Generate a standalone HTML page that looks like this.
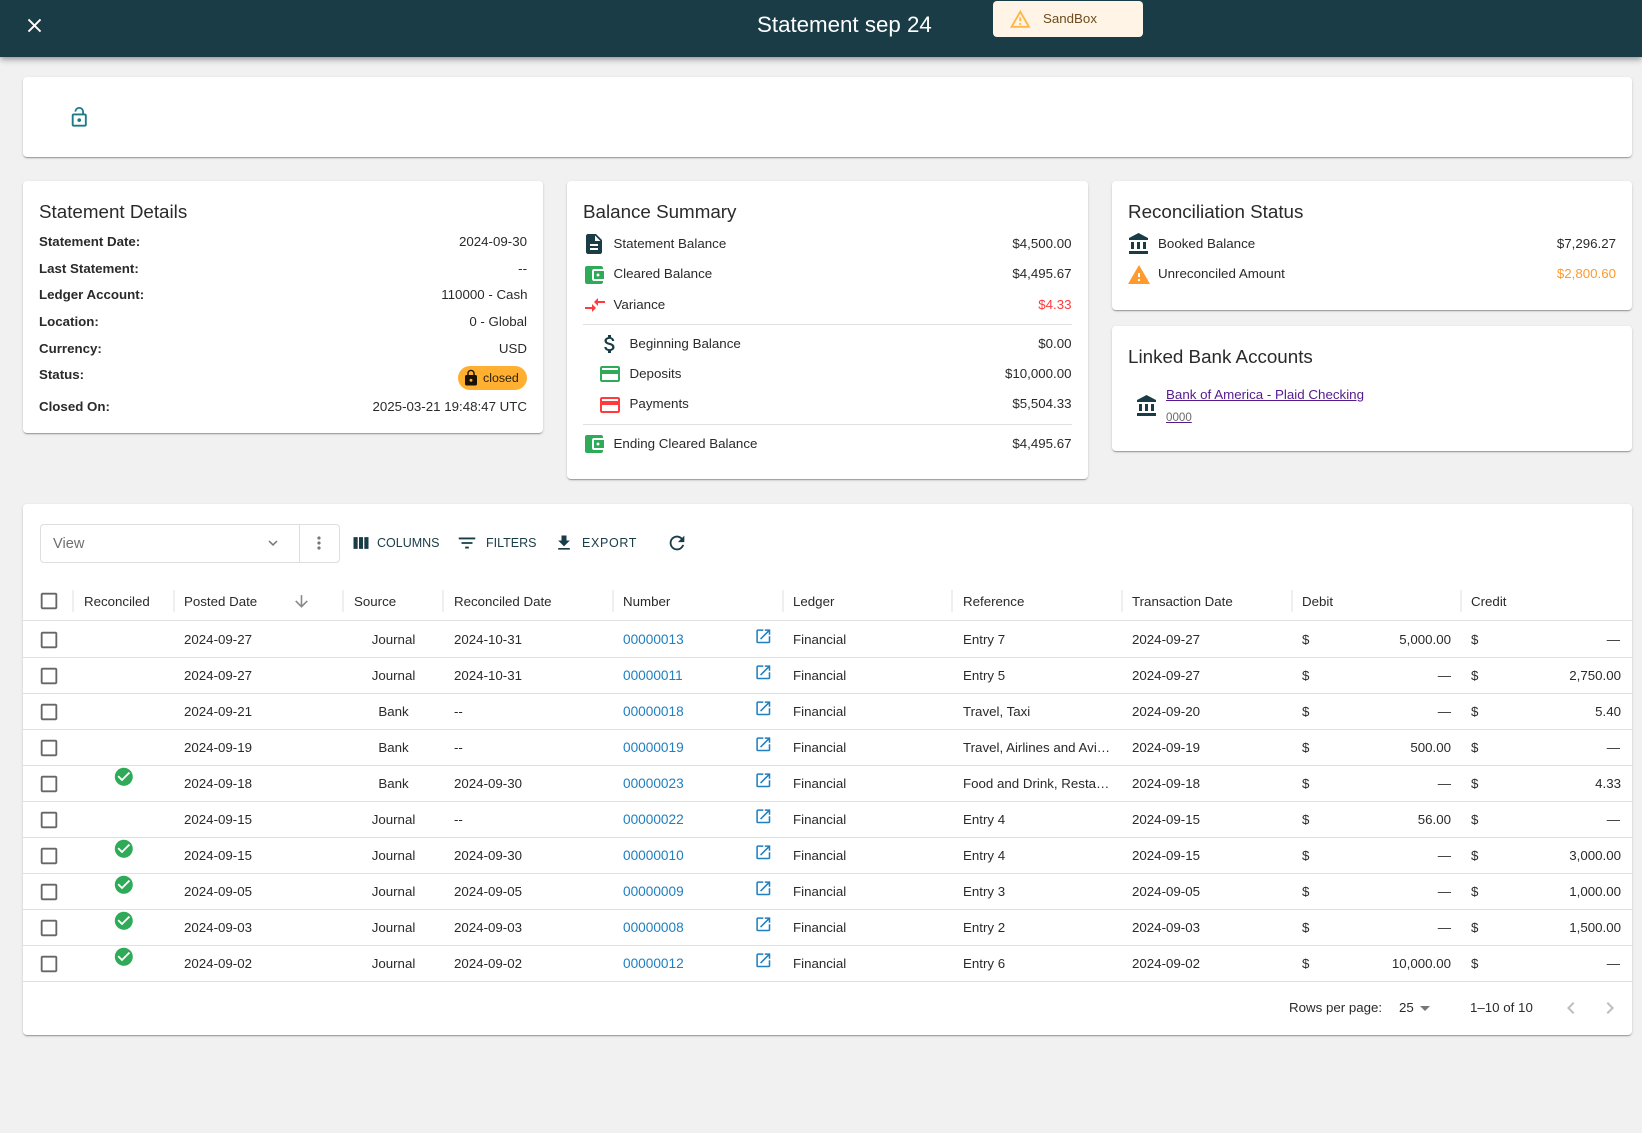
<!DOCTYPE html>
<html lang="en"><head><meta charset="utf-8"><title>Statement sep 24</title>
<style>
*{box-sizing:border-box}
html,body{margin:0;padding:0;width:1642px;height:1133px;overflow:hidden;background:#f1f1f1;font-family:"Liberation Sans",Arial,sans-serif;color:#2a2a2a}
.a{position:absolute}
.card{position:absolute;background:#fff;border-radius:4px;box-shadow:0 2px 1px -1px rgba(0,0,0,.2),0 1px 1px rgba(0,0,0,.14),0 1px 3px rgba(0,0,0,.12)}
.t{position:absolute;white-space:nowrap;line-height:20px;height:20px;font-size:13.3px}
.h{font-size:18.8px;line-height:24px;height:24px}
.b{font-weight:bold}
.l{font-size:13.35px}
.rr{text-align:right;width:300px}
svg.i{position:absolute;width:24px;height:24px;fill:currentColor}
.d{position:absolute;height:1px;background:#e0e0e0}
.sep{position:absolute;top:590px;width:2px;height:22px;background:#efefef}
.r{position:absolute;left:23px;width:1609px;height:35px}
.r i{position:absolute;font-style:normal;line-height:36px;height:36px;font-size:13.3px;white-space:nowrap;top:0}
.r i.lk{color:#1f7fc0;left:600px;font-size:13.65px}
.r i.dt{left:161px}
.r i.src{left:320.5px;width:100px;text-align:center}
.r i.rd{left:431px}
.r i.lg{left:770px}
.r i.rf{left:940px}
.r i.td{left:1109px}
.r i.d1{left:1279px}
.r i.am1{left:1279px;width:149px;text-align:right}
.r i.d2{left:1448px}
.r i.am2{left:1448px;width:150px;text-align:right}
.r i.dash{padding-right:1px}
.r svg.bx{left:15px;top:7px;width:22px;height:22px;color:#666}
.r svg.op{left:731px;top:5px;width:18.6px;height:18.6px;color:#1f7fc0}
.r svg.ck{left:90px;top:0;width:21.6px;height:21.6px;color:#2eaa58}
.bd{position:absolute;left:23px;width:1609px;height:1px;background:#e0e0e0}
.hc{position:absolute;top:592px;line-height:20px;font-size:13.3px;white-space:nowrap}
.bt{position:absolute;top:533px;line-height:20px;font-size:12.5px;color:#193c47;white-space:nowrap}
</style></head><body>
<svg width="0" height="0" style="position:absolute"><defs>
<symbol id="close" viewBox="0 0 24 24"><path d="M19 6.41 17.59 5 12 10.59 6.41 5 5 6.41 10.59 12 5 17.59 6.41 19 12 13.41 17.59 19 19 17.59 13.41 12z"/></symbol>
<symbol id="lockopen" viewBox="0 0 24 24"><path d="M12 17c1.1 0 2-.9 2-2s-.9-2-2-2-2 .9-2 2 .9 2 2 2zm6-9h-1V6c0-2.76-2.24-5-5-5S7 3.24 7 6h1.9c0-1.71 1.39-3.1 3.1-3.1 1.71 0 3.1 1.39 3.1 3.1v2H6c-1.1 0-2 .9-2 2v10c0 1.1.9 2 2 2h12c1.1 0 2-.9 2-2V10c0-1.1-.9-2-2-2zm0 12H6V10h12v10z"/></symbol>
<symbol id="warnout" viewBox="0 0 24 24"><path d="M12 5.99 19.53 19H4.47L12 5.99M12 2 1 21h22L12 2zm1 14h-2v2h2v-2zm0-6h-2v4h2v-4z"/></symbol>
<symbol id="lock" viewBox="0 0 24 24"><path d="M18 8h-1V6c0-2.76-2.24-5-5-5S7 3.24 7 6v2H6c-1.1 0-2 .9-2 2v10c0 1.1.9 2 2 2h12c1.1 0 2-.9 2-2V10c0-1.1-.9-2-2-2zm-6 9c-1.1 0-2-.9-2-2s.9-2 2-2 2 .9 2 2-.9 2-2 2zm3.1-9H8.9V6c0-1.71 1.39-3.1 3.1-3.1 1.71 0 3.1 1.39 3.1 3.1v2z"/></symbol>
<symbol id="doc" viewBox="0 0 24 24"><path d="M14 2H6c-1.1 0-1.99.9-1.99 2L4 20c0 1.1.89 2 1.99 2H18c1.1 0 2-.9 2-2V8l-6-6zm2 16H8v-2h8v2zm0-4H8v-2h8v2zm-3-5V3.5L18.5 9H13z"/></symbol>
<symbol id="wallet" viewBox="0 0 24 24"><path d="M21 18v1c0 1.1-.9 2-2 2H5c-1.11 0-2-.9-2-2V5c0-1.1.89-2 2-2h14c1.1 0 2 .9 2 2v1h-9c-1.11 0-2 .9-2 2v8c0 1.1.89 2 2 2h9zm-9-2h10V8H12v8zm4-2.5c-.83 0-1.5-.67-1.5-1.5s.67-1.5 1.5-1.5 1.5.67 1.5 1.5-.67 1.5-1.5 1.5z"/></symbol>
<symbol id="cmp" viewBox="0 0 24 24"><path d="M9.01 14H2v2h7.01v3L13 15l-3.99-4v3zm5.98-1v-3H22V8h-7.01V5L11 9l3.99 4z"/></symbol>
<symbol id="money" viewBox="0 0 24 24"><path d="M11.8 10.9c-2.27-.59-3-1.2-3-2.15 0-1.09 1.01-1.85 2.7-1.85 1.78 0 2.44.85 2.5 2.1h2.21c-.07-1.72-1.12-3.3-3.21-3.81V3h-3v2.16c-1.94.42-3.5 1.68-3.5 3.61 0 2.31 1.91 3.46 4.7 4.13 2.5.6 3 1.48 3 2.41 0 .69-.49 1.79-2.7 1.79-2.06 0-2.87-.92-2.98-2.1h-2.2c.12 2.19 1.76 3.42 3.68 3.83V21h3v-2.15c1.95-.37 3.5-1.5 3.5-3.55 0-2.84-2.43-3.81-4.7-4.4z"/></symbol>
<symbol id="ccard" viewBox="0 0 24 24"><path d="M20 4H4c-1.11 0-1.99.89-1.99 2L2 18c0 1.11.89 2 2 2h16c1.11 0 2-.89 2-2V6c0-1.11-.89-2-2-2zm0 14H4v-6h16v6zm0-10H4V6h16v2z"/></symbol>
<symbol id="bank" viewBox="0 0 24 24"><path d="M4 10v7h3v-7H4zm6 0v7h3v-7h-3zM2 22h19v-3H2v3zm14-12v7h3v-7h-3zm-4.5-9L2 6v2h19V6l-9.5-5z"/></symbol>
<symbol id="warn" viewBox="0 0 24 24"><path d="M1 21h22L12 2 1 21zm12-3h-2v-2h2v2zm0-4h-2v-4h2v4z"/></symbol>
<symbol id="cols" viewBox="0 0 24 24"><path d="M14.4 5v14H9.6V5zM16 19h5V5h-5zM8 19V5H3v14z"/></symbol>
<symbol id="filter" viewBox="0 0 24 24"><path d="M10 18h4v-2h-4v2zM3 6v2h18V6H3zm3 7h12v-2H6v2z"/></symbol>
<symbol id="dl" viewBox="0 0 24 24"><path d="M5 20h14v-2H5v2zM19 9h-4V3H9v6H5l7 7 7-7z"/></symbol>
<symbol id="refresh" viewBox="0 0 24 24"><path d="M17.65 6.35C16.2 4.9 14.21 4 12 4c-4.42 0-7.99 3.58-7.99 8s3.57 8 7.99 8c3.73 0 6.84-2.55 7.73-6h-2.08c-.82 2.33-3.04 4-5.65 4-3.31 0-6-2.69-6-6s2.69-6 6-6c1.66 0 3.14.69 4.22 1.78L13 11h7V4l-2.35 2.35z"/></symbol>
<symbol id="more" viewBox="0 0 24 24"><path d="M12 8c1.1 0 2-.9 2-2s-.9-2-2-2-2 .9-2 2 .9 2 2 2zm0 2c-1.1 0-2 .9-2 2s.9 2 2 2 2-.9 2-2-.9-2-2-2zm0 6c-1.1 0-2 .9-2 2s.9 2 2 2 2-.9 2-2-.9-2-2-2z"/></symbol>
<symbol id="chev" viewBox="0 0 24 24"><path d="M16.59 8.59 12 13.17 7.41 8.59 6 10l6 6 6-6z"/></symbol>
<symbol id="down" viewBox="0 0 24 24"><path d="M20 12l-1.41-1.41L13 16.17V4h-2v12.17l-5.58-5.59L4 12l8 8 8-8z"/></symbol>
<symbol id="box" viewBox="0 0 24 24"><path d="M19 5v14H5V5h14m0-2H5c-1.1 0-2 .9-2 2v14c0 1.1.9 2 2 2h14c1.1 0 2-.9 2-2V5c0-1.1-.9-2-2-2z"/></symbol>
<symbol id="ok" viewBox="0 0 24 24"><path d="M12 2C6.48 2 2 6.48 2 12s4.48 10 10 10 10-4.48 10-10S17.52 2 12 2zm-2 15l-5-5 1.41-1.41L10 14.17l7.59-7.59L19 8l-9 9z"/></symbol>
<symbol id="open" viewBox="0 0 24 24"><path d="M19 19H5V5h7V3H5c-1.11 0-2 .9-2 2v14c0 1.1.89 2 2 2h14c1.1 0 2-.9 2-2v-7h-2v7zM14 3v2h3.59l-9.83 9.83 1.41 1.41L19 6.41V10h2V3h-7z"/></symbol>
<symbol id="drop" viewBox="0 0 24 24"><path d="M7 10l5 5 5-5z"/></symbol>
<symbol id="cl" viewBox="0 0 24 24"><path d="M15.41 7.41 14 6l-6 6 6 6 1.41-1.41L10.83 12z"/></symbol>
<symbol id="cr" viewBox="0 0 24 24"><path d="M10 6 8.59 7.41 13.17 12l-4.58 4.59L10 18l6-6z"/></symbol>
</defs></svg>

<!-- App bar -->
<div class="a" style="left:0;top:0;width:1642px;height:57px;background:#193c47;box-shadow:0 2px 4px -1px rgba(0,0,0,.2),0 4px 5px rgba(0,0,0,.14),0 1px 10px rgba(0,0,0,.12)"></div>
<svg class="i" style="left:23px;top:14px;width:23px;height:23px;color:#fff"><use href="#close"/></svg>
<div class="t" style="left:757px;top:11px;height:28px;line-height:28px;font-size:22.3px;color:#fff">Statement sep 24</div>
<div class="a" style="left:993px;top:1px;width:150px;height:36px;background:#fff4e5;border-radius:4px"></div>
<svg class="i" style="left:1009px;top:7.6px;width:22.5px;height:22.5px;color:#ffb547"><use href="#warnout"/></svg>
<div class="t" style="left:1043px;top:9px;color:#6d4c1f;font-size:13.3px">SandBox</div>

<!-- Toolbar card -->
<div class="card" style="left:23px;top:77px;width:1609px;height:80px"></div>
<svg class="i" style="left:67.75px;top:106.2px;width:22.5px;height:22.5px;color:#1b7c85"><use href="#lockopen"/></svg>

<!-- Statement Details -->
<div class="card" style="left:23px;top:181px;width:520px;height:252px"></div>
<div class="t h" style="left:39px;top:200px">Statement Details</div>
<div class="t b" style="left:39px;top:232px">Statement Date:</div><div class="t rr" style="left:227px;top:232px">2024-09-30</div>
<div class="t b" style="left:39px;top:259px">Last Statement:</div><div class="t rr" style="left:227px;top:259px">--</div>
<div class="t b" style="left:39px;top:285px">Ledger Account:</div><div class="t rr" style="left:227.5px;top:285px">110000 - Cash</div>
<div class="t b" style="left:39px;top:312px">Location:</div><div class="t rr" style="left:227px;top:312px">0 - Global</div>
<div class="t b" style="left:39px;top:339px">Currency:</div><div class="t rr" style="left:227px;top:339px">USD</div>
<div class="t b" style="left:39px;top:365px">Status:</div>
<div class="a" style="left:458px;top:366px;width:69px;height:24px;border-radius:12px;background:#ffb031"></div>
<svg class="i" style="left:462px;top:368.5px;width:18px;height:18px;color:#1a1205"><use href="#lock"/></svg>
<div class="t" style="left:483px;top:368px;font-size:12.4px;color:#2a1f08">closed</div>
<div class="t b" style="left:39px;top:397px">Closed On:</div><div class="t rr" style="left:227px;top:397px">2025-03-21 19:48:47 UTC</div>

<!-- Balance Summary -->
<div class="card" style="left:567px;top:181px;width:521px;height:298px"></div>
<div class="t h" style="left:583px;top:200px">Balance Summary</div>
<svg class="i" style="left:582px;top:232px;color:#193c47"><use href="#doc"/></svg>
<div class="t l" style="left:613.5px;top:234px">Statement Balance</div><div class="t rr" style="left:771.5px;top:234px">$4,500.00</div>
<svg class="i" style="left:582px;top:263px;color:#2eaa58"><use href="#wallet"/></svg>
<div class="t l" style="left:613.5px;top:264px">Cleared Balance</div><div class="t rr" style="left:771.5px;top:264px">$4,495.67</div>
<svg class="i" style="left:582.5px;top:293px;color:#ff3b3b"><use href="#cmp"/></svg>
<div class="t l" style="left:613.5px;top:295px">Variance</div><div class="t rr" style="left:771.5px;top:295px;color:#ff3b3b">$4.33</div>
<div class="d" style="left:583px;top:324px;width:489px"></div>
<svg class="i" style="left:598px;top:332px;color:#193c47"><use href="#money"/></svg>
<div class="t l" style="left:629.5px;top:334px">Beginning Balance</div><div class="t rr" style="left:771.5px;top:334px">$0.00</div>
<svg class="i" style="left:598px;top:362px;color:#2eaa58"><use href="#ccard"/></svg>
<div class="t l" style="left:629.5px;top:364px">Deposits</div><div class="t rr" style="left:771.5px;top:364px">$10,000.00</div>
<svg class="i" style="left:598px;top:393px;color:#ff3b3b"><use href="#ccard"/></svg>
<div class="t l" style="left:629.5px;top:394px">Payments</div><div class="t rr" style="left:771.5px;top:394px">$5,504.33</div>
<div class="d" style="left:583px;top:424px;width:489px"></div>
<svg class="i" style="left:582px;top:432px;color:#2eaa58"><use href="#wallet"/></svg>
<div class="t l" style="left:613.5px;top:434px">Ending Cleared Balance</div><div class="t rr" style="left:771.5px;top:434px">$4,495.67</div>

<!-- Reconciliation Status -->
<div class="card" style="left:1112px;top:181px;width:520px;height:129px"></div>
<div class="t h" style="left:1128px;top:200px">Reconciliation Status</div>
<svg class="i" style="left:1127px;top:232px;color:#193c47"><use href="#bank"/></svg>
<div class="t l" style="left:1158px;top:234px">Booked Balance</div><div class="t rr" style="left:1316px;top:234px">$7,296.27</div>
<svg class="i" style="left:1127px;top:263px;color:#ff9a2e"><use href="#warn"/></svg>
<div class="t l" style="left:1158px;top:264px">Unreconciled Amount</div><div class="t rr" style="left:1316px;top:264px;color:#ff9a2e">$2,800.60</div>

<!-- Linked Bank Accounts -->
<div class="card" style="left:1112px;top:326px;width:520px;height:125px"></div>
<div class="t h" style="left:1128px;top:345px">Linked Bank Accounts</div>
<svg class="i" style="left:1135px;top:394px;color:#193c47"><use href="#bank"/></svg>
<div class="t l" style="left:1166px;top:385px;color:#551a8b;text-decoration:underline">Bank of America - Plaid Checking</div>
<div class="t" style="left:1166px;top:408px;font-size:11.6px;color:#6b6b6b;text-decoration:underline;text-decoration-color:#551a8b">0000</div>

<!-- Data grid -->
<div class="card" style="left:23px;top:504px;width:1609px;height:531px"></div>
<div class="a" style="left:40px;top:524px;width:300px;height:39px;border:1px solid #dedede;border-radius:4px"></div>
<div class="a" style="left:299px;top:524px;width:1px;height:39px;background:#dedede"></div>
<div class="t" style="left:53px;top:534px;font-size:14.6px;color:#6f6f6f">View</div>
<svg class="i" style="left:264px;top:534px;width:18px;height:18px;color:#777"><use href="#chev"/></svg>
<svg class="i" style="left:309px;top:533px;width:20px;height:20px;color:#777"><use href="#more"/></svg>
<svg class="i" style="left:350.5px;top:533px;width:20px;height:20px;color:#193c47"><use href="#cols"/></svg>
<div class="bt" style="left:377px">COLUMNS</div>
<svg class="i" style="left:456px;top:532px;width:22px;height:22px;color:#193c47"><use href="#filter"/></svg>
<div class="bt" style="left:486px">FILTERS</div>
<svg class="i" style="left:554px;top:533.4px;width:20px;height:20px;color:#193c47"><use href="#dl"/></svg>
<div class="bt" style="left:582px;letter-spacing:.65px">EXPORT</div>
<svg class="i" style="left:666px;top:532px;width:22px;height:22px;color:#193c47"><use href="#refresh"/></svg>

<!-- Grid header -->
<svg class="i" style="left:38px;top:590px;width:22px;height:22px;color:#666"><use href="#box"/></svg>
<div class="sep" style="left:72px"></div><div class="sep" style="left:173px"></div><div class="sep" style="left:342px"></div><div class="sep" style="left:442px"></div><div class="sep" style="left:612px"></div><div class="sep" style="left:782px"></div><div class="sep" style="left:951px"></div><div class="sep" style="left:1121px"></div><div class="sep" style="left:1291px"></div><div class="sep" style="left:1460px"></div>
<div class="hc" style="left:84px">Reconciled</div>
<div class="hc" style="left:184px">Posted Date</div>
<svg class="i" style="left:292px;top:592px;width:19px;height:19px;color:#8a8a8a"><use href="#down"/></svg>
<div class="hc" style="left:354px">Source</div>
<div class="hc" style="left:454px">Reconciled Date</div>
<div class="hc" style="left:623px">Number</div>
<div class="hc" style="left:793px">Ledger</div>
<div class="hc" style="left:963px">Reference</div>
<div class="hc" style="left:1132px">Transaction Date</div>
<div class="hc" style="left:1302px">Debit</div>
<div class="hc" style="left:1471px">Credit</div>
<div class="bd" style="top:620px"></div>

<!-- Rows -->
<div class="r" style="top:622px"><svg class="i bx"><use href="#box"/></svg><i class="dt">2024-09-27</i><i class="src">Journal</i><i class="rd">2024-10-31</i><i class="lk">00000013</i><svg class="i op"><use href="#open"/></svg><i class="lg">Financial</i><i class="rf">Entry 7</i><i class="td">2024-09-27</i><i class="d1">$</i><i class="am1">5,000.00</i><i class="d2">$</i><i class="am2 dash">—</i></div><div class="bd" style="top:657px"></div>
<div class="r" style="top:658px"><svg class="i bx"><use href="#box"/></svg><i class="dt">2024-09-27</i><i class="src">Journal</i><i class="rd">2024-10-31</i><i class="lk">00000011</i><svg class="i op"><use href="#open"/></svg><i class="lg">Financial</i><i class="rf">Entry 5</i><i class="td">2024-09-27</i><i class="d1">$</i><i class="am1">—</i><i class="d2">$</i><i class="am2">2,750.00</i></div><div class="bd" style="top:693px"></div>
<div class="r" style="top:694px"><svg class="i bx"><use href="#box"/></svg><i class="dt">2024-09-21</i><i class="src">Bank</i><i class="rd">--</i><i class="lk">00000018</i><svg class="i op"><use href="#open"/></svg><i class="lg">Financial</i><i class="rf">Travel, Taxi</i><i class="td">2024-09-20</i><i class="d1">$</i><i class="am1">—</i><i class="d2">$</i><i class="am2">5.40</i></div><div class="bd" style="top:729px"></div>
<div class="r" style="top:730px"><svg class="i bx"><use href="#box"/></svg><i class="dt">2024-09-19</i><i class="src">Bank</i><i class="rd">--</i><i class="lk">00000019</i><svg class="i op"><use href="#open"/></svg><i class="lg">Financial</i><i class="rf">Travel, Airlines and Avi…</i><i class="td">2024-09-19</i><i class="d1">$</i><i class="am1">500.00</i><i class="d2">$</i><i class="am2 dash">—</i></div><div class="bd" style="top:765px"></div>
<div class="r" style="top:766px"><svg class="i bx"><use href="#box"/></svg><svg class="i ck"><use href="#ok"/></svg><i class="dt">2024-09-18</i><i class="src">Bank</i><i class="rd">2024-09-30</i><i class="lk">00000023</i><svg class="i op"><use href="#open"/></svg><i class="lg">Financial</i><i class="rf">Food and Drink, Resta…</i><i class="td">2024-09-18</i><i class="d1">$</i><i class="am1">—</i><i class="d2">$</i><i class="am2">4.33</i></div><div class="bd" style="top:801px"></div>
<div class="r" style="top:802px"><svg class="i bx"><use href="#box"/></svg><i class="dt">2024-09-15</i><i class="src">Journal</i><i class="rd">--</i><i class="lk">00000022</i><svg class="i op"><use href="#open"/></svg><i class="lg">Financial</i><i class="rf">Entry 4</i><i class="td">2024-09-15</i><i class="d1">$</i><i class="am1">56.00</i><i class="d2">$</i><i class="am2 dash">—</i></div><div class="bd" style="top:837px"></div>
<div class="r" style="top:838px"><svg class="i bx"><use href="#box"/></svg><svg class="i ck"><use href="#ok"/></svg><i class="dt">2024-09-15</i><i class="src">Journal</i><i class="rd">2024-09-30</i><i class="lk">00000010</i><svg class="i op"><use href="#open"/></svg><i class="lg">Financial</i><i class="rf">Entry 4</i><i class="td">2024-09-15</i><i class="d1">$</i><i class="am1">—</i><i class="d2">$</i><i class="am2">3,000.00</i></div><div class="bd" style="top:873px"></div>
<div class="r" style="top:874px"><svg class="i bx"><use href="#box"/></svg><svg class="i ck"><use href="#ok"/></svg><i class="dt">2024-09-05</i><i class="src">Journal</i><i class="rd">2024-09-05</i><i class="lk">00000009</i><svg class="i op"><use href="#open"/></svg><i class="lg">Financial</i><i class="rf">Entry 3</i><i class="td">2024-09-05</i><i class="d1">$</i><i class="am1">—</i><i class="d2">$</i><i class="am2">1,000.00</i></div><div class="bd" style="top:909px"></div>
<div class="r" style="top:910px"><svg class="i bx"><use href="#box"/></svg><svg class="i ck"><use href="#ok"/></svg><i class="dt">2024-09-03</i><i class="src">Journal</i><i class="rd">2024-09-03</i><i class="lk">00000008</i><svg class="i op"><use href="#open"/></svg><i class="lg">Financial</i><i class="rf">Entry 2</i><i class="td">2024-09-03</i><i class="d1">$</i><i class="am1">—</i><i class="d2">$</i><i class="am2">1,500.00</i></div><div class="bd" style="top:945px"></div>
<div class="r" style="top:946px"><svg class="i bx"><use href="#box"/></svg><svg class="i ck"><use href="#ok"/></svg><i class="dt">2024-09-02</i><i class="src">Journal</i><i class="rd">2024-09-02</i><i class="lk">00000012</i><svg class="i op"><use href="#open"/></svg><i class="lg">Financial</i><i class="rf">Entry 6</i><i class="td">2024-09-02</i><i class="d1">$</i><i class="am1">10,000.00</i><i class="d2">$</i><i class="am2 dash">—</i></div><div class="bd" style="top:981px"></div>

<!-- Footer -->
<div class="t" style="left:1289px;top:998px">Rows per page:</div>
<div class="t" style="left:1399px;top:998px">25</div>
<svg class="i" style="left:1413px;top:996px;color:#777"><use href="#drop"/></svg>
<div class="t" style="left:1470px;top:998px">1–10 of 10</div>
<svg class="i" style="left:1559px;top:996px;color:#bdbdbd"><use href="#cl"/></svg>
<svg class="i" style="left:1598px;top:996px;color:#bdbdbd"><use href="#cr"/></svg>
</body></html>
